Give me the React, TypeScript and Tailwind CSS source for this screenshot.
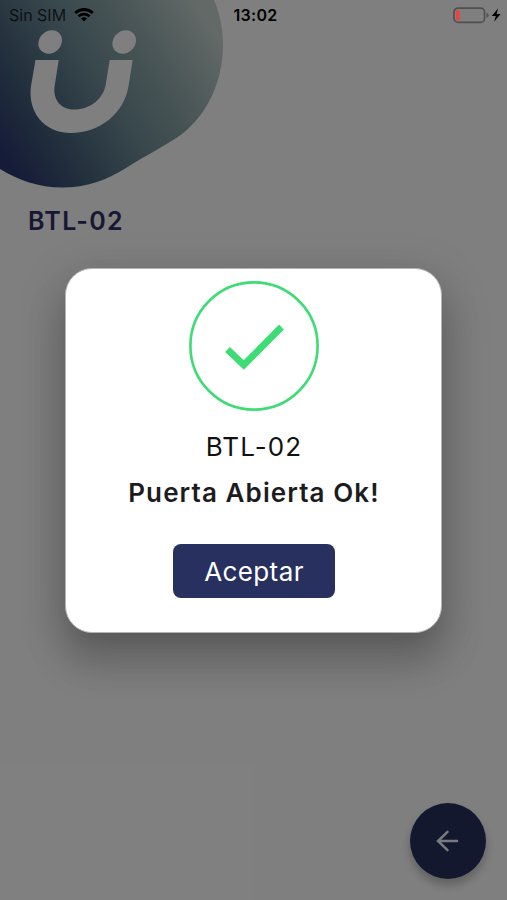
function StatusBar() {
  return (
    <header className="absolute inset-x-0 top-0 z-20 grid h-[30px] grid-cols-3 items-center pl-[9px] pr-[5px] text-black">
      <div className="flex items-center gap-[8px]">
        <span className="text-[16px] leading-[30px] text-black/75">
          Sin SIM
        </span>
        <svg className="h-[14px] w-[20px]" viewBox="0 0 20 14" fill="none">
          <path d="M1.2 5C6.1.4 13.9.4 18.8 5" stroke="currentColor" strokeWidth="2.9" />
          <path d="M4.4 8.3C7.5 5.4 12.5 5.4 15.6 8.3" stroke="currentColor" strokeWidth="2.7" />
          <path d="M6.9 10.5C8.7 8.9 11.3 8.9 13.1 10.5L10 13.6Z" fill="currentColor" />
        </svg>
      </div>
      <span className="text-center text-[16px] font-semibold leading-[30px] tracking-[0.3px]">
        13:02
      </span>
      <div className="flex items-center justify-end">
        <svg className="h-[17px] w-[49px]" viewBox="0 0 49 17" fill="none">
          <rect x="1" y="1.2" width="30.6" height="14.2" rx="4" stroke="#505050" strokeWidth="1.7" />
          <rect x="3.1" y="3.3" width="3.5" height="10.2" rx="1" fill="#f5403a" />
          <path d="M33.6 5.8C36.3 6.8 36.3 9.8 33.6 10.8Z" fill="#505050" />
          <path d="M45 1.6L38.8 9.1H42.8L41.1 14.8L47.6 6.9H43.7Z" fill="black" />
        </svg>
      </div>
    </header>
  );
}

function Logo() {
  return (
    <svg className="h-[190px] w-[226px]" viewBox="0 0 226 190" fill="none">
      <defs>
        <linearGradient id="blob" gradientUnits="userSpaceOnUse" x1="10" y1="172" x2="220" y2="40">
          <stop offset="0" stopColor="#2b3670" />
          <stop offset="0.22" stopColor="#435d78" />
          <stop offset="0.5" stopColor="#708f99" />
          <stop offset="0.75" stopColor="#95adae" />
          <stop offset="1" stopColor="#c6d3cf" />
        </linearGradient>
      </defs>
      <path
        d="M0 0H214C220 14 223 29 223 45C223 79 209 113 182 134C164 147 144 156 126 168C107 180 87 187.5 62 187.5C39 187.5 18 180 0 169Z"
        fill="url(#blob)"
      />
      <g fill="white">
        <ellipse cx="50.2" cy="42" rx="12.6" ry="10.8" transform="rotate(-43 50.2 42)" />
        <ellipse cx="124.2" cy="42" rx="12.6" ry="10.8" transform="rotate(-43 124.2 42)" />
        <path d="M35.5 60H58.7L54.5 87C53 100 61 109.5 74 109.5C90 109.5 103.5 99 105.8 84L109.700 60H132.700L128.500 86C124.500 113 100 133 71 133C44 133 27.500 112 31 86Z" />
      </g>
    </svg>
  );
}

function SuccessDialog() {
  return (
    <section
      role="dialog"
      className="flex h-[365px] w-[377px] flex-col items-center rounded-[27px] border border-[#b5b5b5] bg-white pt-[12px] shadow-[0_30px_38px_3px_rgba(0,0,0,0.16),0_11px_46px_8px_rgba(0,0,0,0.12),0_13px_18px_-7px_rgba(0,0,0,0.07)]"
    >
      <svg className="size-[130px]" viewBox="0 0 130 130" fill="none">
        <circle cx="65" cy="65" r="63.6" stroke="#3edc75" strokeWidth="2.6" />
        <path d="M38.5 68.5L54.8 84L92.5 46" stroke="#3edc75" strokeWidth="6.8" />
      </svg>
      <p className="mt-[20px] pl-px text-[26px] leading-[32px] tracking-[1.1px] text-[#111]">BTL-02</p>
      <h2 className="mt-[14px] pl-px text-[26px] font-semibold leading-[32px] tracking-[1.1px] text-[#1c1c1e]">
        Puerta Abierta Ok!
      </h2>
      <button className="mt-[35px] h-[54px] w-[162px] rounded-[8px] bg-[#28305f] pl-px text-[26px] tracking-[0.4px] text-white">
        Aceptar
      </button>
    </section>
  );
}

export default function App() {
  return (
    <div className="relative flex h-[900px] w-[507px] flex-col overflow-hidden bg-white font-['Inter','Liberation_Sans',sans-serif]">
      <StatusBar />
      <main className="flex flex-1 flex-col">
        <Logo />
        <h1 className="ml-[28px] mt-[15px] text-[25px] font-semibold leading-[32px] tracking-[1.3px] text-[#302e68]">
          BTL-02
        </h1>
      </main>
      <footer className="flex justify-end pb-[21px] pr-[21px]">
        <button className="flex size-[76px] items-center justify-center rounded-full bg-[#28305f] shadow-[0_6px_10px_rgba(0,0,0,0.25)]">
          <svg className="size-[24px]" viewBox="0 0 24 24" fill="none">
            <path
              d="M21 12H2.5M11.500 2.800L2 12L11.500 21.200"
              stroke="#f4f4fa"
              strokeWidth="2.5"
              strokeLinecap="round"
            />
          </svg>
        </button>
      </footer>
      <div className="absolute inset-0 z-10 flex justify-center bg-black/50 pt-[268px]">
        <SuccessDialog />
      </div>
    </div>
  );
}
